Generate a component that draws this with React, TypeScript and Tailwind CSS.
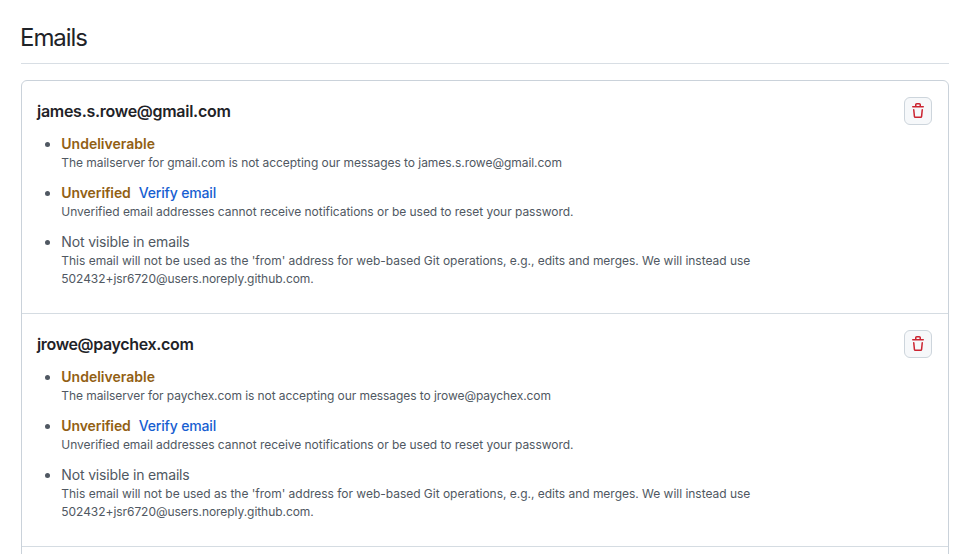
const emails = [
  {
    address: 'james.s.rowe@gmail.com',
    domain: 'gmail.com',
    titleTracking: 'tracking-[-0.28px]',
    noteTracking: 'tracking-[-0.047px]',
  },
  {
    address: 'jrowe@paychex.com',
    domain: 'paychex.com',
    titleTracking: 'tracking-[-0.35px]',
    noteTracking: 'tracking-[-0.072px]',
  },
];

function TrashIcon() {
  return (
    <svg width="16" height="16" viewBox="0 0 16 16" fill="#cb2431">
      <path d="M11 1.75V3h2.25a.75.75 0 0 1 0 1.5H2.75a.75.75 0 0 1 0-1.5H5V1.75C5 .784 5.784 0 6.75 0h2.5C10.216 0 11 .784 11 1.75ZM4.496 6.675l.66 6.6a.25.25 0 0 0 .249.225h5.19a.25.25 0 0 0 .249-.225l.66-6.6a.75.75 0 0 1 1.492.149l-.66 6.6A1.748 1.748 0 0 1 10.595 15h-5.19a1.75 1.75 0 0 1-1.741-1.575l-.66-6.6a.75.75 0 1 1 1.492-.15ZM6.5 1.75V3h3V1.75a.25.25 0 0 0-.25-.25h-2.5a.25.25 0 0 0-.25.25Z" />
    </svg>
  );
}

type EmailItemProps = (typeof emails)[number];

function EmailItem({ address, domain, titleTracking, noteTracking }: EmailItemProps) {
  return (
    <li className="h-[233px] border-b border-[#d5dce2] px-4 pt-4">
      <div className="-ml-px flex h-7 items-center justify-between">
        <h3 className={`text-[16px] font-semibold leading-6 text-[#1f2328] ${titleTracking}`}>{address}</h3>
        <button
          aria-label="Delete email"
          className="flex h-7 w-7 items-center justify-center rounded-md border border-[#cdd5dc] bg-[#f6f8fa]"
        >
          <TrashIcon />
        </button>
      </div>
      <ul className="ml-[-0.7px] list-disc pl-6 pt-2 text-[14px] leading-[21px] text-[#505862]">
        <li className="h-[49px]">
          <span className="font-semibold text-[#925f14]">Undeliverable</span>
          <p className={`text-[12px] leading-[18px] ${noteTracking}`}>
            The mailserver for {domain} is not accepting our messages to {address}
          </p>
        </li>
        <li className="h-[49px]">
          <span className="font-semibold tracking-[-0.1px] text-[#925f14]">Unverified</span>
          <a className="ml-2 font-medium tracking-[-0.16px] text-[#175ed1]">Verify email</a>
          <p className="text-[12px] leading-[18px] tracking-[-0.04px]">
            Unverified email addresses cannot receive notifications or be used to reset your password.
          </p>
        </li>
        <li>
          <span className="tracking-[-0.16px]">Not visible in emails</span>
          <p className="text-[12px] leading-[18px] tracking-[-0.02px]">
            This email will not be used as the 'from' address for web-based Git operations, e.g., edits and merges. We will instead use
            <br />
            <span className="tracking-[-0.05px]">502432+jsr6720@users.noreply.github.com.</span>
          </p>
        </li>
      </ul>
    </li>
  );
}

export default function App() {
  return (
    <main className="h-[554px] overflow-hidden bg-white pl-[21px] pr-[19px] font-['Inter',sans-serif]">
      <h2 className="flex h-16 items-end border-b border-[#d8dee4] pb-[7px] text-[24px] leading-9 tracking-[-1.05px] text-[#1f2328]">
        <span className="-ml-px">Emails</span>
      </h2>
      <ul className="mt-4 h-[600px] rounded-md border border-[#cad2da]">
        {emails.map((email) => (
          <EmailItem key={email.address} {...email} />
        ))}
      </ul>
    </main>
  );
}
